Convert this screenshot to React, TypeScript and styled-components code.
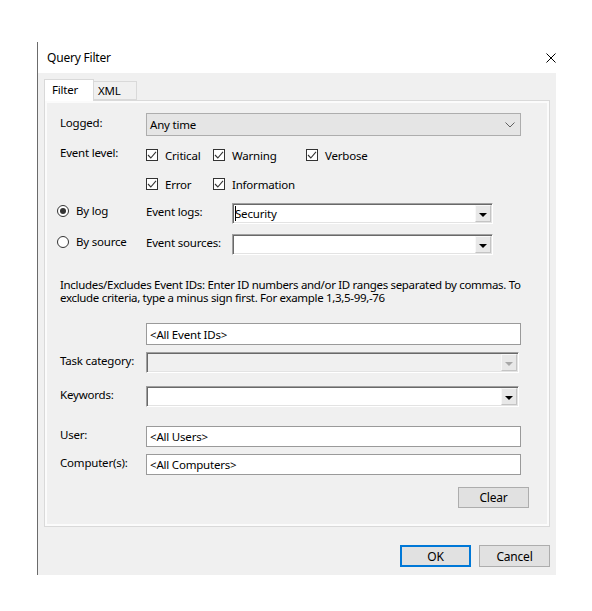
import React from "react";
import styled, { createGlobalStyle } from "styled-components";

const GlobalStyle = createGlobalStyle`
  html, body { margin: 0; padding: 0; background: #fff; }
  body {
    font-family: "Noto Sans", "Open Sans", sans-serif;
    font-size: 11.5px;
    letter-spacing: -0.2px;
    color: #000;
  }
  * { box-sizing: border-box; }
`;

const Window = styled.div`
  margin: 42px 0 0 37px;
  width: 519px;
  border-left: 1px solid #6b6b6b;
`;

const TitleBar = styled.div`
  height: 31px;
  background: #fff;
  display: flex;
  align-items: center;
  justify-content: space-between;
  padding: 0 0 0 9px;
`;

const Title = styled.span`
  font-size: 12px;
  letter-spacing: -0.2px;
`;

const Body = styled.div`
  background: #f0f0f0;
  height: 502px;
  padding: 6px 6px 8px 6px;
  display: flex;
  flex-direction: column;
`;

const TabStrip = styled.div`
  display: flex;
  align-items: flex-end;
  height: 21px;
`;

const Tab = styled.div<{ $active?: boolean; $w: number }>`
  width: ${(p) => p.$w}px;
  height: ${(p) => (p.$active ? 22 : 19)}px;
  margin-bottom: ${(p) => (p.$active ? -1 : 0)}px;
  position: relative;
  z-index: ${(p) => (p.$active ? 1 : 0)};
  background: ${(p) => (p.$active ? "#fff" : "#f0f0f0")};
  border: 1px solid #d9d9d9;
  border-bottom: ${(p) => (p.$active ? "none" : "1px solid #d9d9d9")};
  border-left: ${(p) => (p.$active ? "1px solid #d9d9d9" : "none")};
  display: flex;
  align-items: ${(p) => (p.$active ? "flex-start" : "center")};
  padding-top: ${(p) => (p.$active ? 1 : 0)}px;
  padding-left: ${(p) => (p.$active ? 7 : 4)}px;
  line-height: 17px;
`;

const Panel = styled.div`
  height: 427px;
  border: 1px solid #d9d9d9;
  box-shadow: inset 0 0 0 2px #fbfbfb;
  padding: 12px 20px 18px 15px;
  display: flex;
  flex-direction: column;
`;

const Row = styled.div<{ $mt?: number; $indent?: number; $align?: string }>`
  display: flex;
  align-items: ${(p) => p.$align || "center"};
  margin-top: ${(p) => p.$mt || 0}px;
  margin-left: ${(p) => p.$indent || 0}px;
`;

const Label = styled.span<{ $w?: number; $pt?: number }>`
  width: ${(p) => p.$w || 86}px;
  flex: none;
  line-height: 15px;
  white-space: nowrap;
  padding-bottom: ${(p) => (p.$pt !== undefined ? 0 : 4)}px;
  padding-top: ${(p) => p.$pt || 0}px;
`;

const Select = styled.div`
  width: 375px;
  height: 23px;
  background: #e5e5e5;
  border: 1px solid #adadad;
  display: flex;
  align-items: center;
  justify-content: space-between;
  padding: 0 5px 0 3px;
`;

const CheckGrid = styled.div`
  display: grid;
  grid-template-columns: 67px 93px auto;
  grid-auto-rows: 20px;
  row-gap: 9px;
`;

const CheckItem = styled.label`
  display: flex;
  align-items: center;
  gap: 7px;
`;

const Box = styled.span`
  width: 12px;
  height: 12px;
  border: 1px solid #333;
  background: #fff;
  display: flex;
  align-items: center;
  justify-content: center;
`;

const RadioItem = styled.label`
  width: 89px;
  flex: none;
  display: flex;
  align-items: center;
  gap: 7px;
  line-height: 15px;
  margin-left: -3px;
`;

const RadioCircle = styled.span<{ $on?: boolean }>`
  width: 12px;
  height: 12px;
  border-radius: 50%;
  border: 1px solid #333;
  background: #fff;
  display: flex;
  align-items: center;
  justify-content: center;
  &::after {
    content: "";
    width: 6px;
    height: 6px;
    border-radius: 50%;
    background: ${(p) => (p.$on ? "#333" : "transparent")};
  }
`;

const Combo = styled.div<{ $w: number; $disabled?: boolean }>`
  width: ${(p) => p.$w}px;
  height: 21px;
  flex: none;
  border-top: 1px solid #a0a0a0;
  border-left: 1px solid #a0a0a0;
  border-right: 1px solid #fff;
  border-bottom: 1px solid #fff;
  box-shadow: inset 1px 1px 0 #696969, inset -1px -1px 0 #e3e3e3;
  background: ${(p) => (p.$disabled ? "#f0f0f0" : "#fff")};
  display: flex;
  align-items: center;
  padding: 1px;
`;

const ComboText = styled.span<{ $caret?: boolean }>`
  flex: 1;
  padding-left: 1px;
  line-height: 17px;
  position: relative;
  &::before {
    content: "";
    display: ${(p) => (p.$caret ? "block" : "none")};
    position: absolute;
    left: 1px;
    top: 1px;
    width: 1px;
    height: 15px;
    background: #000;
  }
`;

const DropButton = styled.span<{ $disabled?: boolean }>`
  width: 16px;
  height: 17px;
  flex: none;
  background: #e8e8e8;
  border-top: 1px solid #f8f8f8;
  border-left: 1px solid #f8f8f8;
  border-right: 1px solid #c4c4c4;
  border-bottom: 1px solid #c4c4c4;
  display: flex;
  align-items: center;
  justify-content: center;
  &::after {
    content: "";
    width: 0;
    height: 0;
    margin-top: 2px;
    border-left: 4px solid transparent;
    border-right: 4px solid transparent;
    border-top: 4px solid ${(p) => (p.$disabled ? "#a8a8a8" : "#000")};
  }
`;

const TextBox = styled.div<{ $h?: number }>`
  width: 375px;
  height: ${(p) => p.$h || 21}px;
  flex: none;
  background: #fff;
  border: 1px solid #9a9a9a;
  display: flex;
  align-items: center;
  padding-left: 3px;
`;

const Description = styled.div`
  margin-top: 23px;
  letter-spacing: -0.32px;
  white-space: nowrap;
`;

const DescLine = styled.div`
  height: 13px;
  line-height: 13px;
`;

const Button = styled.button<{ $primary?: boolean; $h?: number }>`
  width: 71px;
  height: ${(p) => p.$h || 21}px;
  background: #e1e1e1;
  border: 1px solid ${(p) => (p.$primary ? "#0078d7" : "#adadad")};
  box-shadow: ${(p) => (p.$primary ? "inset 0 0 0 1px #0078d7" : "none")};
  font-family: inherit;
  font-size: 12px;
  letter-spacing: -0.2px;
  color: #000;
  padding: 0;
`;

const ButtonRow = styled.div<{ $mt: number }>`
  display: flex;
  justify-content: flex-end;
  gap: 8px;
  margin-top: ${(p) => p.$mt}px;
`;

const Check = ({ label }: { label: string }) => (
  <CheckItem>
    <Box>
      <svg width="10" height="10" viewBox="0 0 10 10">
        <polyline points="1,5 3.8,8 9,1.8" fill="none" stroke="#333" strokeWidth="1.1" />
      </svg>
    </Box>
    {label}
  </CheckItem>
);

export default function App() {
  return (
    <>
      <GlobalStyle />
      <Window>
        <TitleBar>
          <Title>Query Filter</Title>
          <svg width="10" height="10" viewBox="0 0 10 10">
            <path d="M0.5 0.5 L9.5 9.5 M9.5 0.5 L0.5 9.5" stroke="#000" strokeWidth="1" />
          </svg>
        </TitleBar>
        <Body>
          <TabStrip>
            <Tab $active $w={50}>Filter</Tab>
            <Tab $w={43}>XML</Tab>
          </TabStrip>
          <Panel>
            <Row>
              <Label>Logged:</Label>
              <Select>
                <span>Any time</span>
                <svg width="10" height="6" viewBox="0 0 10 6">
                  <polyline points="0.5,0.5 5,5 9.5,0.5" fill="none" stroke="#606060" strokeWidth="1" />
                </svg>
              </Select>
            </Row>
            <Row $mt={9} $align="flex-start">
              <Label $pt={0}>Event level:</Label>
              <CheckGrid>
                <Check label="Critical" />
                <Check label="Warning" />
                <Check label="Verbose" />
                <Check label="Error" />
                <Check label="Information" />
              </CheckGrid>
            </Row>
            <Row $mt={9} $align="flex-start">
              <RadioItem>
                <RadioCircle $on />
                By log
              </RadioItem>
              <Label $pt={1}>Event logs:</Label>
              <Combo $w={261}>
                <ComboText $caret>Security</ComboText>
                <DropButton />
              </Combo>
            </Row>
            <Row $mt={10} $align="flex-start">
              <RadioItem>
                <RadioCircle />
                By source
              </RadioItem>
              <Label $pt={1}>Event sources:</Label>
              <Combo $w={261}>
                <ComboText />
                <DropButton />
              </Combo>
            </Row>
            <Description>
              <DescLine>
                Includes/Excludes Event IDs: Enter ID numbers and/or ID ranges separated by commas. To
              </DescLine>
              <DescLine>exclude criteria, type a minus sign first. For example 1,3,5-99,-76</DescLine>
            </Description>
            <Row $mt={19} $indent={86}>
              <TextBox $h={22}>&lt;All Event IDs&gt;</TextBox>
            </Row>
            <Row $mt={7}>
              <Label>Task category:</Label>
              <Combo $w={373} $disabled>
                <ComboText />
                <DropButton $disabled />
              </Combo>
            </Row>
            <Row $mt={13}>
              <Label>Keywords:</Label>
              <Combo $w={373}>
                <ComboText />
                <DropButton />
              </Combo>
            </Row>
            <Row $mt={19}>
              <Label>User:</Label>
              <TextBox>&lt;All Users&gt;</TextBox>
            </Row>
            <Row $mt={7}>
              <Label>Computer(s):</Label>
              <TextBox>&lt;All Computers&gt;</TextBox>
            </Row>
            <ButtonRow $mt={12}>
              <Button>Clear</Button>
            </ButtonRow>
          </Panel>
          <ButtonRow $mt={18}>
            <Button $primary $h={22}>OK</Button>
            <Button $h={22}>Cancel</Button>
          </ButtonRow>
        </Body>
      </Window>
    </>
  );
}
